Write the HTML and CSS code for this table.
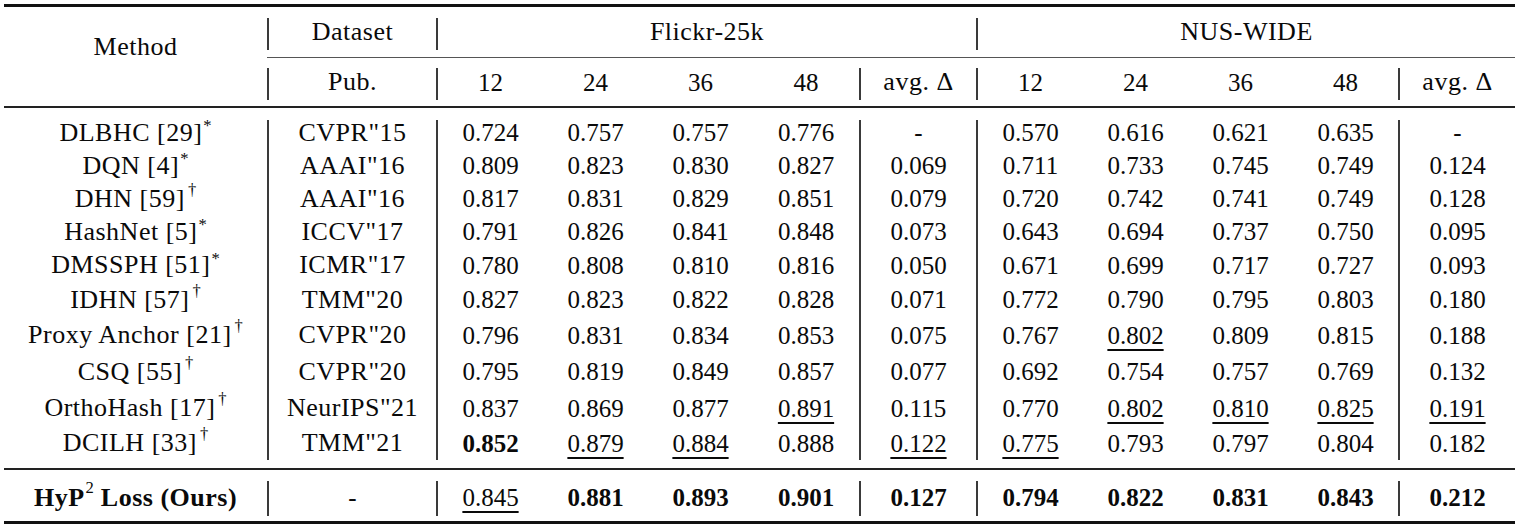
FILE: index.html
```html
<!DOCTYPE html>
<html>
<head>
<meta charset="utf-8">
<link rel="stylesheet" href="styles.css">
</head>
<body>
<div class="table">
  <div class="rule thick"></div>

  <div class="grid head">
    <div class="cell t method-head">Method</div>
    <div class="bar r1 c2"></div>
    <div class="bar r1 c4"></div>
    <div class="bar r1 c11"></div>
    <div class="cmid"></div>
    <div class="bar r3 c2"></div>
    <div class="bar r3 c4"></div>
    <div class="bar r3 c9"></div>
    <div class="bar r3 c11"></div>
    <div class="bar r3 c16"></div>
    <div class="cell t">Dataset</div>
    <div class="cell t span6">Flickr-25k</div>
    <div class="cell t span6">NUS-WIDE</div>
    <div class="cell t">Pub.</div>
    <div class="cell">12</div>
    <div class="cell">24</div>
    <div class="cell">36</div>
    <div class="cell">48</div>
    <div class="cell t">avg. Δ</div>
    <div class="cell">12</div>
    <div class="cell">24</div>
    <div class="cell">36</div>
    <div class="cell">48</div>
    <div class="cell t">avg. Δ</div>
  </div>

  <div class="rule mid"></div>

  <div class="grid body-rows">
    <div class="bar all c2"></div>
    <div class="bar all c4"></div>
    <div class="bar all c9"></div>
    <div class="bar all c11"></div>
    <div class="bar all c16"></div>

    <div class="cell t"><span>DLBHC [29]<sup class="ast">*</sup></span></div><div class="cell t">CVPR"15</div>
    <div class="cell">0.724</div><div class="cell">0.757</div><div class="cell">0.757</div><div class="cell">0.776</div><div class="cell">-</div>
    <div class="cell">0.570</div><div class="cell">0.616</div><div class="cell">0.621</div><div class="cell">0.635</div><div class="cell">-</div>

    <div class="cell t"><span>DQN [4]<sup class="ast">*</sup></span></div><div class="cell t">AAAI"16</div>
    <div class="cell">0.809</div><div class="cell">0.823</div><div class="cell">0.830</div><div class="cell">0.827</div><div class="cell">0.069</div>
    <div class="cell">0.711</div><div class="cell">0.733</div><div class="cell">0.745</div><div class="cell">0.749</div><div class="cell">0.124</div>

    <div class="cell t"><span>DHN [59]<sup class="dag">†</sup></span></div><div class="cell t">AAAI"16</div>
    <div class="cell">0.817</div><div class="cell">0.831</div><div class="cell">0.829</div><div class="cell">0.851</div><div class="cell">0.079</div>
    <div class="cell">0.720</div><div class="cell">0.742</div><div class="cell">0.741</div><div class="cell">0.749</div><div class="cell">0.128</div>

    <div class="cell t"><span>HashNet [5]<sup class="ast">*</sup></span></div><div class="cell t">ICCV"17</div>
    <div class="cell">0.791</div><div class="cell">0.826</div><div class="cell">0.841</div><div class="cell">0.848</div><div class="cell">0.073</div>
    <div class="cell">0.643</div><div class="cell">0.694</div><div class="cell">0.737</div><div class="cell">0.750</div><div class="cell">0.095</div>

    <div class="cell t"><span>DMSSPH [51]<sup class="ast">*</sup></span></div><div class="cell t">ICMR"17</div>
    <div class="cell">0.780</div><div class="cell">0.808</div><div class="cell">0.810</div><div class="cell">0.816</div><div class="cell">0.050</div>
    <div class="cell">0.671</div><div class="cell">0.699</div><div class="cell">0.717</div><div class="cell">0.727</div><div class="cell">0.093</div>

    <div class="cell t"><span>IDHN [57]<sup class="dag">†</sup></span></div><div class="cell t">TMM"20</div>
    <div class="cell">0.827</div><div class="cell">0.823</div><div class="cell">0.822</div><div class="cell">0.828</div><div class="cell">0.071</div>
    <div class="cell">0.772</div><div class="cell">0.790</div><div class="cell">0.795</div><div class="cell">0.803</div><div class="cell">0.180</div>

    <div class="cell t"><span>Proxy Anchor [21]<sup class="dag">†</sup></span></div><div class="cell t">CVPR"20</div>
    <div class="cell">0.796</div><div class="cell">0.831</div><div class="cell">0.834</div><div class="cell">0.853</div><div class="cell">0.075</div>
    <div class="cell">0.767</div><div class="cell"><u>0.802</u></div><div class="cell">0.809</div><div class="cell">0.815</div><div class="cell">0.188</div>

    <div class="cell t"><span>CSQ [55]<sup class="dag">†</sup></span></div><div class="cell t">CVPR"20</div>
    <div class="cell">0.795</div><div class="cell">0.819</div><div class="cell">0.849</div><div class="cell">0.857</div><div class="cell">0.077</div>
    <div class="cell">0.692</div><div class="cell">0.754</div><div class="cell">0.757</div><div class="cell">0.769</div><div class="cell">0.132</div>

    <div class="cell t"><span>OrthoHash [17]<sup class="dag">†</sup></span></div><div class="cell t">NeurIPS"21</div>
    <div class="cell">0.837</div><div class="cell">0.869</div><div class="cell">0.877</div><div class="cell"><u>0.891</u></div><div class="cell">0.115</div>
    <div class="cell">0.770</div><div class="cell"><u>0.802</u></div><div class="cell"><u>0.810</u></div><div class="cell"><u>0.825</u></div><div class="cell"><u>0.191</u></div>

    <div class="cell t"><span>DCILH [33]<sup class="dag">†</sup></span></div><div class="cell t">TMM"21</div>
    <div class="cell"><b>0.852</b></div><div class="cell"><u>0.879</u></div><div class="cell"><u>0.884</u></div><div class="cell">0.888</div><div class="cell"><u>0.122</u></div>
    <div class="cell"><u>0.775</u></div><div class="cell">0.793</div><div class="cell">0.797</div><div class="cell">0.804</div><div class="cell">0.182</div>
  </div>

  <div class="rule mid"></div>

  <div class="grid last-row">
    <div class="bar one c2"></div>
    <div class="bar one c4"></div>
    <div class="bar one c9"></div>
    <div class="bar one c11"></div>
    <div class="bar one c16"></div>
    <div class="cell t"><b>HyP<sup class="sq">2</sup> Loss (Ours)</b></div><div class="cell">-</div>
    <div class="cell"><u>0.845</u></div><div class="cell"><b>0.881</b></div><div class="cell"><b>0.893</b></div><div class="cell"><b>0.901</b></div><div class="cell"><b>0.127</b></div>
    <div class="cell"><b>0.794</b></div><div class="cell"><b>0.822</b></div><div class="cell"><b>0.831</b></div><div class="cell"><b>0.843</b></div><div class="cell"><b>0.212</b></div>
  </div>

  <div class="rule thick"></div>
</div>
</body>
</html>
```

FILE: styles.css
```css
html, body {
  margin: 0;
  padding: 0;
  background: #ffffff;
}

body {
  font-family: "Liberation Serif", "Times New Roman", serif;
  font-size: 25px;
  color: #0a0a0a;
}

.table {
  width: 1511px;
  margin-left: 4px;
  padding-top: 4px;
}

.rule {
  width: 100%;
  background: #111;
}

.rule.thick {
  height: 3px;
}

.rule.mid {
  height: 2px;
  background: #222;
}

.grid {
  display: grid;
  grid-template-columns: 263px 2px 167px 2px 105px 105px 105px 106px 2px 115px 2px 105px 105px 105px 105px 2px 115px;
}

.cell {
  display: flex;
  align-items: center;
  justify-content: center;
  white-space: nowrap;
  line-height: 1;
}

.cell.t {
  font-size: 26px;
  letter-spacing: 0.5px;
}

.bar {
  background: #3a3a3a;
  width: 2px;
}

.c2 { grid-column: 2; }
.c4 { grid-column: 4; }
.c9 { grid-column: 9; }
.c11 { grid-column: 11; }
.c16 { grid-column: 16; }

/* header */
.head {
  grid-template-rows: 50px 1px 48px;
}

.method-head {
  grid-column: 1;
  grid-row: 1 / 4;
  padding-bottom: 19px;
}

.span6 {
  grid-column: span 6;
}

.cmid {
  grid-column: 2 / -1;
  grid-row: 2;
  background: #555;
}

.bar.r1 {
  grid-row: 1;
  margin: 11px 0 7px;
}

.bar.r3 {
  grid-row: 3;
  margin: 10px 0 6px;
}

/* body */
.body-rows {
  grid-template-rows: 33px 33px 33px 33px 34px 35px 36px 37px 36px 34px;
  padding: 8px 0;
}

.bar.all {
  grid-row: 1 / -1;
  margin-top: 4px;
}

/* last row */
.last-row {
  grid-template-rows: 51px;
}

.last-row .cell {
  padding-top: 4px;
}

.bar.one {
  grid-row: 1;
  margin: 11px 0 5px;
}

sup {
  line-height: 0;
  font-size: 0.64em;
  color: #0a0a0a;
  letter-spacing: 0;
}

sup.ast {
  vertical-align: 0.55em;
  margin-left: 1px;
}

sup.dag {
  vertical-align: 0.7em;
  margin-left: 3px;
}

sup.sq {
  vertical-align: 0.75em;
  font-weight: normal;
  margin-left: 1px;
}

u {
  text-decoration: underline;
  text-decoration-thickness: 2px;
  text-underline-offset: 5px;
}

b {
  font-weight: bold;
}
```
